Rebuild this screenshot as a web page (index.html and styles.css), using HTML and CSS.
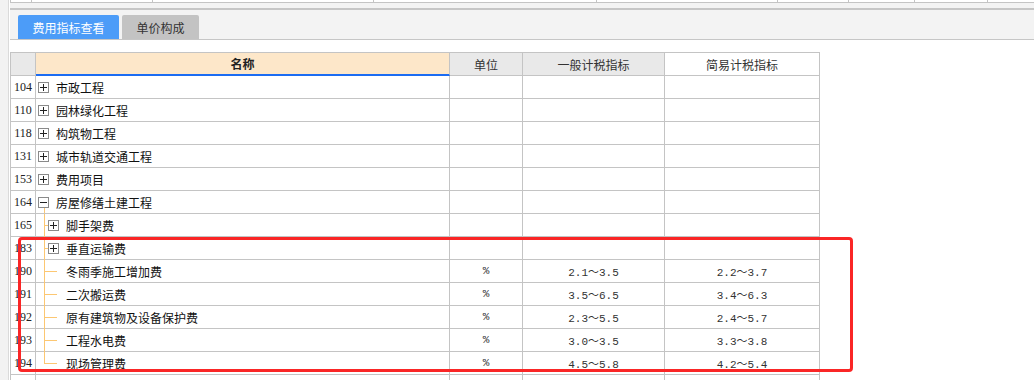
FILE: index.html
```html
<!DOCTYPE html>
<html lang="zh-CN">

<head>
	<meta charset="UTF-8">
	<title>费用指标查看</title>
	<link rel="stylesheet" href="styles.css">
</head>

<body>
	<div class="app">
		<aside class="side"></aside>
		<div class="main">
			<div class="top-grid">
				<span></span><span></span><span></span><span></span><span></span><span></span><span></span><span></span><span></span>
			</div>
			<div class="splitter"></div>
			<div class="tabs">
				<button class="tab active">费用指标查看</button>
				<button class="tab">单价构成</button>
			</div>
			<div class="sheet">
				<div class="grid">
					<div class="c hd"></div>
					<div class="c hd name-hd">名称</div>
					<div class="c hd">单位</div>
					<div class="c hd">一般计税指标</div>
					<div class="c hd plain">简易计税指标</div>

					<div class="c no">104</div>
					<div class="c name"><i class="box plus"></i>市政工程</div>
					<div class="c"></div><div class="c"></div><div class="c"></div>

					<div class="c no">110</div>
					<div class="c name"><i class="box plus"></i>园林绿化工程</div>
					<div class="c"></div><div class="c"></div><div class="c"></div>

					<div class="c no">118</div>
					<div class="c name"><i class="box plus"></i>构筑物工程</div>
					<div class="c"></div><div class="c"></div><div class="c"></div>

					<div class="c no">131</div>
					<div class="c name"><i class="box plus"></i>城市轨道交通工程</div>
					<div class="c"></div><div class="c"></div><div class="c"></div>

					<div class="c no">153</div>
					<div class="c name"><i class="box plus"></i>费用项目</div>
					<div class="c"></div><div class="c"></div><div class="c"></div>

					<div class="c no">164</div>
					<div class="c name open"><i class="box"></i>房屋修缮土建工程</div>
					<div class="c"></div><div class="c"></div><div class="c"></div>

					<div class="c no">165</div>
					<div class="c name"><span class="guide stub"></span><i class="box plus"></i>脚手架费</div>
					<div class="c"></div><div class="c"></div><div class="c"></div>

					<div class="c no">183</div>
					<div class="c name"><span class="guide stub"></span><i class="box plus"></i>垂直运输费</div>
					<div class="c"></div><div class="c"></div><div class="c"></div>

					<div class="c no">190</div>
					<div class="c name"><span class="guide leaf"></span>冬雨季施工增加费</div>
					<div class="c num">%</div><div class="c num">2.1～3.5</div><div class="c num">2.2～3.7</div>

					<div class="c no">191</div>
					<div class="c name"><span class="guide leaf"></span>二次搬运费</div>
					<div class="c num">%</div><div class="c num">3.5～6.5</div><div class="c num">3.4～6.3</div>

					<div class="c no">192</div>
					<div class="c name"><span class="guide leaf"></span>原有建筑物及设备保护费</div>
					<div class="c num">%</div><div class="c num">2.3～5.5</div><div class="c num">2.4～5.7</div>

					<div class="c no">193</div>
					<div class="c name"><span class="guide leaf"></span>工程水电费</div>
					<div class="c num">%</div><div class="c num">3.0～3.5</div><div class="c num">3.3～3.8</div>

					<div class="c no">194</div>
					<div class="c name"><span class="guide leaf last"></span>现场管理费</div>
					<div class="c num">%</div><div class="c num">4.5～5.8</div><div class="c num">4.2～5.4</div>

					<div class="c no">218</div>
					<div class="c name"><i class="box plus"></i>房屋修缮安装工程</div>
					<div class="c"></div><div class="c"></div><div class="c"></div>
				</div>
			</div>
		</div>
	</div>
	<div class="mark"></div>
</body>

</html>
```

FILE: styles.css
```css
body {
	margin: 0;
	background: #fff;
	color: #222;
	font-family: "Noto Sans CJK SC", sans-serif;
	font-size: 12px;
	position: relative;
	height: 380px;
	overflow: hidden;
}

.app {
	display: flex;
	height: 100%;
}

.side {
	width: 8px;
	background: #f2f2f2;
	border-right: 1px solid #dadada;
	margin-right: 1px;
}

.main {
	flex: 1;
	display: flex;
	flex-direction: column;
}

.main > * {
	flex-shrink: 0;
}

.top-grid {
	height: 2px;
	display: grid;
	grid-template-columns: 21px 121px 221px 223px 181px 71px 66px 73px 1fr;
	border-left: 1px solid #c4c4c4;
	border-bottom: 1px solid #c4c4c4;
}

.top-grid span {
	border-right: 1px solid #c4c4c4;
}

.top-grid span:last-child {
	border-right: none;
}

.splitter {
	height: 5px;
	background: #f3f3f3;
	border-bottom: 2px solid #c6c6c6;
}

.tabs {
	display: flex;
	gap: 3px;
	height: 24px;
	padding: 5px 0 0 8px;
	background: #f3f3f3;
	border-bottom: 1px solid #c6c6c6;
}

.tab {
	border: none;
	border-radius: 2px 2px 0 0;
	background: #c3c3c3;
	color: #333;
	font-family: inherit;
	font-size: 12px;
	padding: 0;
	width: 77px;
	height: 24px;
}

.tab.active {
	width: 101px;
	background: #4c9cf8;
	color: #fff;
}

.sheet {
	padding-top: 12px;
}

.grid {
	display: grid;
	grid-template-columns: 25px 414px 73px 142px 155px;
	width: fit-content;
	border-left: 1px solid #c4c4c4;
	border-top: 1px solid #c4c4c4;
}

.c {
	box-sizing: border-box;
	height: 23px;
	border-right: 1px solid #c4c4c4;
	border-bottom: 1px solid #c4c4c4;
	display: flex;
	align-items: center;
	justify-content: center;
	white-space: nowrap;
}

.hd {
	background: #e9e9e9;
	color: #333;
}

.hd.plain {
	background: #fff;
}

.name-hd {
	background: #fde7c9;
	border-bottom: 2px solid #1c6cf2;
	font-weight: bold;
	color: #222;
}

.no {
	font-family: "Liberation Serif", serif;
	font-size: 12px;
}

.name {
	justify-content: flex-start;
	color: #111;
}

.num {
	font-family: "Liberation Mono", "Noto Sans CJK SC", monospace;
	font-size: 11px;
	color: #333;
}

.box {
	flex: none;
	box-sizing: border-box;
	width: 11px;
	height: 11px;
	margin: 0 7px 0 2px;
	border: 1px solid #8a8a8a;
	background: linear-gradient(#222, #222) center / 7px 1px no-repeat, #fff;
}

.box.plus {
	background: linear-gradient(#222, #222) center / 1px 7px no-repeat,
		linear-gradient(#222, #222) center / 7px 1px no-repeat, #fff;
}

.open {
	background: linear-gradient(#fcc772, #fcc772) 8px 100% / 1px 6px no-repeat;
}

.guide {
	flex: none;
	align-self: stretch;
	margin: 0 0 -1px 8px;
	background: linear-gradient(#fcc772, #fcc772) left top / 1px 100% no-repeat,
		linear-gradient(#fcc772, #fcc772) left 0 top 11px / 100% 1px no-repeat;
}

.guide.stub {
	width: 4px;
}

.guide.stub + .box {
	margin-left: 0;
}

.guide.leaf {
	width: 13px;
	margin-right: 9px;
}

.guide.last {
	background: linear-gradient(#fcc772, #fcc772) left top / 1px 11px no-repeat,
		linear-gradient(#fcc772, #fcc772) left 0 top 11px / 100% 1px no-repeat;
}

.mark {
	position: absolute;
	left: 18px;
	top: 237px;
	width: 835px;
	height: 135px;
	box-sizing: border-box;
	border: 3px solid #fa2626;
	border-radius: 4px;
}
```
